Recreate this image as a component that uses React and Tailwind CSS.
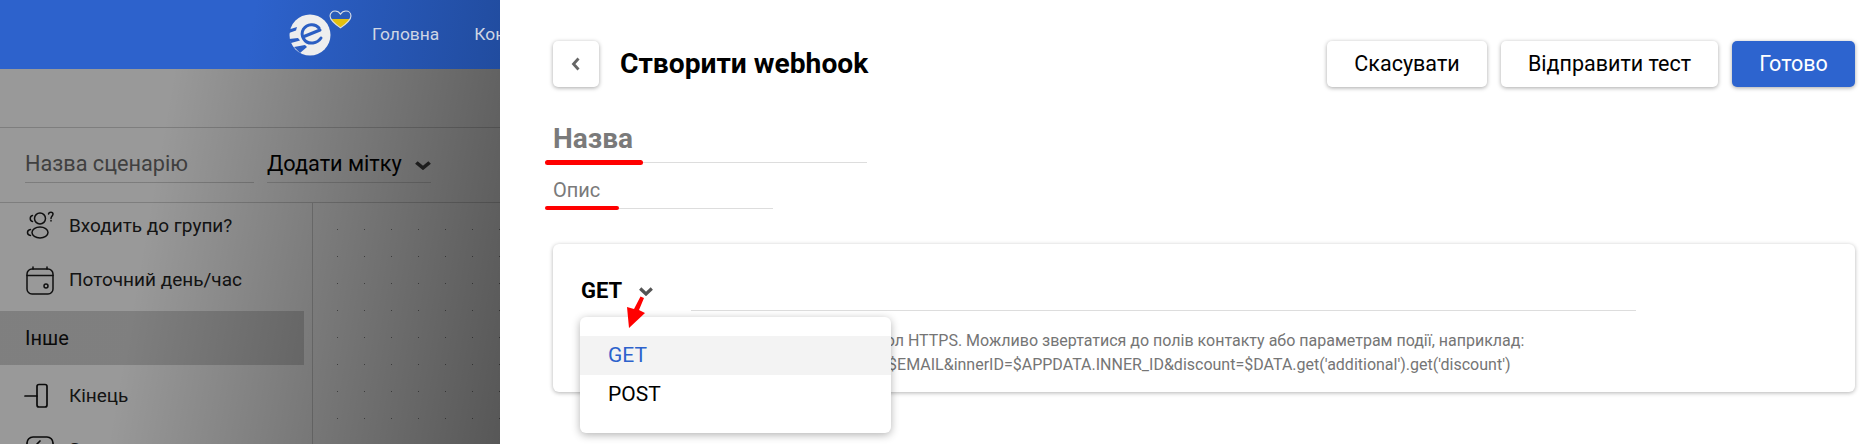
function Chevron({ width = 14, height = 9, color = "#555555" }) {
  return (
    <svg width={width} height={height} viewBox="0 0 14 9" preserveAspectRatio="none" className="shrink-0">
      <path d="M1.200 1.500 L7 7 L12.800 1.500" fill="none" stroke={color} strokeWidth="3.200" />
    </svg>
  );
}

function Logo() {
  return (
    <svg width="42" height="42" viewBox="0 0 42 42" className="shrink-0">
      <circle cx="21" cy="21" r="20.500" fill="#eeeeee" />
      <path d="M0 15.500 L8 13 L7 16.500 L0 19 Z" fill="#2b5ec3" />
      <path d="M0 25 L9 24 L11 26.500 L2 29 Z" fill="#2b5ec3" />
      <path d="M5 33 L16 31 L18 33 L11 39 Z" fill="#2b5ec3" />
      <path
        d="M30 14 C26 9 18 10 14.500 15 C11 21 15 30 24 29 C27 28.500 30 27 32 24"
        fill="none"
        stroke="#2b5ec3"
        strokeWidth="3"
        strokeLinecap="round"
      />
      <path d="M15 22.500 L31 16" fill="none" stroke="#2b5ec3" strokeWidth="3" strokeLinecap="round" />
    </svg>
  );
}

function Heart() {
  return (
    <svg width="23" height="19" viewBox="0 0 24 20" className="shrink-0 self-start mt-[10px] -ml-[2px]">
      <defs>
        <linearGradient id="ua" x1="0" y1="0" x2="0" y2="1">
          <stop offset="0.46" stopColor="#2a5bb8" />
          <stop offset="0.46" stopColor="#e3c010" />
        </linearGradient>
      </defs>
      <path
        d="M12 18.800 C5 14 1 10.500 1 6.300 C1 3 3.500 1 6.300 1 C8.600 1 10.700 2.200 12 4.300 C13.300 2.200 15.400 1 17.700 1 C20.500 1 23 3 23 6.300 C23 10.500 19 14 12 18.800 Z"
        fill="url(#ua)"
        stroke="#d8dde6"
        strokeWidth="1.200"
      />
    </svg>
  );
}

function GroupIcon() {
  return (
    <svg width="30" height="30" viewBox="0 0 30 30" fill="none" stroke="#1a1a1a" strokeWidth="1.500" strokeLinecap="round">
      <circle cx="16" cy="7.500" r="5.500" />
      <ellipse cx="16" cy="21.500" rx="8" ry="5.500" />
      <path d="M8.500 4.500 C5.500 5 5.500 10 8.500 10.500" />
      <path d="M6.500 18.500 C2.500 19 2.500 24 6.500 24.500" />
      <path d="M24.500 3 C25 0.500 29 0.500 29 3 C29 5 27 5 27 7.500 M27 9.500 L27 10" />
    </svg>
  );
}

function CalendarIcon() {
  return (
    <svg width="30" height="30" viewBox="0 0 30 30" fill="none" stroke="#1a1a1a" strokeWidth="1.500" strokeLinecap="round">
      <rect x="3" y="4" width="26" height="25" rx="5" />
      <path d="M3 10.500 H29" />
      <path d="M9 2 V4 M23 2 V4" />
      <circle cx="22" cy="21" r="2" />
    </svg>
  );
}

function EndIcon() {
  return (
    <svg width="30" height="30" viewBox="0 0 30 30" fill="none" stroke="#111111" strokeWidth="1.700" strokeLinecap="round">
      <rect x="13" y="3.500" width="10" height="22.500" rx="2" />
      <path d="M1 15 H13" />
    </svg>
  );
}

function DelayIcon() {
  return (
    <svg width="30" height="30" viewBox="0 0 30 30" fill="none" stroke="#111111" strokeWidth="1.700" strokeLinecap="round">
      <rect x="3" y="2" width="26" height="26" rx="6" />
      <path d="M16 6 L13 9" />
    </svg>
  );
}

function SideItem({ icon, label, className = "" }) {
  return (
    <div className={`h-[54px] shrink-0 flex items-center gap-[15px] pl-[24px] text-[19px] text-[#222222] ${className}`}>
      {icon}
      <span>{label}</span>
    </div>
  );
}

function ActionButton({ children, primary, width }) {
  return (
    <button
      className={`h-[46px] rounded-[5px] text-[21.500px] shadow-[0_1px_4px_rgba(0,0,0,0.35)] ${width} ${
        primary ? "bg-[#2d64cf] text-white" : "bg-white text-black"
      }`}
    >
      {children}
    </button>
  );
}

export default function App() {
  return (
    <div className="flex h-[444px] w-[1873px] overflow-hidden bg-white font-['Roboto',sans-serif]">
      {/* Dimmed page behind the drawer */}
      <div className="relative w-[500px] h-full shrink-0 overflow-hidden bg-white flex flex-col">
        <header className="relative z-10 h-[69px] shrink-0 flex items-center pl-[289px] bg-[linear-gradient(100deg,#2d62cc_0%,#2d62cc_50%,#214c9f_100%)]">
          <Logo />
          <Heart />
          <nav className="flex gap-[35px] ml-[20px] text-[17.400px] text-[#cfd6e4] whitespace-nowrap">
            <span>Головна</span>
            <span>Контакти</span>
          </nav>
        </header>

        <div className="h-[59px] shrink-0 border-b border-[#d2d2d2]" />

        <div className="h-[75px] shrink-0 flex gap-[13px] pl-[25px] pt-[13px] border-b border-[#d2d2d2]">
          <div className="w-[229px] h-[42px] border-b border-[#cfcfcf] text-[21.700px] leading-[46px] text-[#6a6a6a]">
            Назва сценарію
          </div>
          <div className="w-[164px] h-[42px] border-b border-[#d6d6d6] flex justify-between text-[21.700px] leading-[46px] text-black">
            <span>Додати мітку</span>
            <span className="pt-[20px]">
              <Chevron width={16} height={9} color="#444444" />
            </span>
          </div>
        </div>

        <div className="flex flex-1 min-h-0">
          <aside className="w-[313px] shrink-0 border-r border-[#d2d2d2] pr-[8px] flex flex-col overflow-hidden">
            <SideItem icon={<GroupIcon />} label="Входить до групи?" className="-mt-[4px]" />
            <SideItem icon={<CalendarIcon />} label="Поточний день/час" />
            <div className="h-[54px] mt-[4px] shrink-0 flex items-center pl-[25px] text-[20px] text-[#111111] bg-[#d4d4d4]">Інше</div>
            <SideItem icon={<EndIcon />} label="Кінець" className="mt-[4px]" />
            <SideItem icon={<DelayIcon />} label="Зачекати" />
          </aside>
          <div className="flex-1 bg-white bg-[radial-gradient(circle,#8a8a8a_0.8px,transparent_1px)] bg-[size:27px_27px] bg-[position:11px_-14px]" />
        </div>

        <div className="absolute inset-0 bg-[linear-gradient(100deg,rgba(0,0,0,0.4)_0%,rgba(0,0,0,0.4)_32%,rgba(0,0,0,0.66)_100%)]" />
      </div>

      {/* Drawer */}
      <main className="flex-1 min-w-0 pl-[53px] pr-[18px] pt-[41px] bg-white">
        <div className="flex items-center">
          <button className="w-[46px] h-[46px] rounded-[5px] bg-white flex items-center justify-center shadow-[0_1px_4px_rgba(0,0,0,0.35)]">
            <svg width="10" height="14" viewBox="0 0 10 14">
              <path d="M7.500 1.500 L2.500 7 L7.500 12.500" fill="none" stroke="#666666" strokeWidth="2.800" />
            </svg>
          </button>
          <h1 className="ml-[21px] text-[28.200px] font-bold text-black">Створити webhook</h1>
          <div className="ml-auto flex gap-[14px]">
            <ActionButton width="w-[160px]">Скасувати</ActionButton>
            <ActionButton width="w-[217px]">Відправити тест</ActionButton>
            <ActionButton width="w-[123px]" primary>
              Готово
            </ActionButton>
          </div>
        </div>

        <div className="relative -ml-[8px] mt-[23px] w-[322px] h-[53px] pl-[8px] border-b border-[#dddddd] text-[28px] leading-[57px] font-bold text-[#7a7a7a]">
          Назва
          <div className="absolute left-0 -bottom-[3px] w-[98px] h-[5px] rounded-full bg-[#ff0000]" />
        </div>
        <div className="relative -ml-[8px] mt-[6px] w-[228px] h-[40px] pl-[8px] border-b border-[#dddddd] text-[20px] leading-[42px] text-[#7a7a7a]">
          Опис
          <div className="absolute left-0 -bottom-[2px] w-[74px] h-[4px] rounded-full bg-[#ff0000]" />
        </div>

        <section className="relative mt-[35px] h-[148px] rounded-[6px] bg-white shadow-[0_1px_4px_rgba(0,0,0,0.3)] pl-[28px] pr-[219px] pt-[31px] flex">
          <div className="w-[110px] shrink-0 flex items-start gap-[17px] text-[22px] font-bold text-black leading-[32px]">
            <span>GET</span>
            <span className="pt-[12px]">
              <Chevron />
            </span>
          </div>
          <div className="flex-1 min-w-0">
            <div className="h-[36px] border-b border-[#dddddd]" />
            <p className="mt-[18px] text-[16px] leading-[24px] text-[#757575] whitespace-nowrap">
              Використовується протокол HTTPS. Можливо звертатися до полів контакту або параметрам події, наприклад:
              <br />
              https://simple.com/?email=$EMAIL&innerID=$APPDATA.INNER_ID&discount=$DATA.get('additional').get('discount')
            </p>
          </div>

          {/* Method dropdown */}
          <div className="absolute z-10 left-[27px] top-[73px] w-[311px] h-[116px] rounded-[6px] bg-white py-[19px] text-[21px] shadow-[0_2px_8px_rgba(0,0,0,0.3)]">
            <div className="h-[39px] flex items-center pl-[28px] bg-[#f3f3f3] text-[#2d62cc]">GET</div>
            <div className="h-[39px] flex items-center pl-[28px] text-black">POST</div>
          </div>

          {/* Red annotation arrow */}
          <svg width="24" height="36" viewBox="0 0 24 36" className="absolute z-20 left-[72px] top-[52px]">
            <path d="M15.500 0.500 L19 2 L14 14 L20 17 L4 32 L2 11 L9 13 Z" fill="#ff0000" />
          </svg>
        </section>
      </main>
    </div>
  );
}
